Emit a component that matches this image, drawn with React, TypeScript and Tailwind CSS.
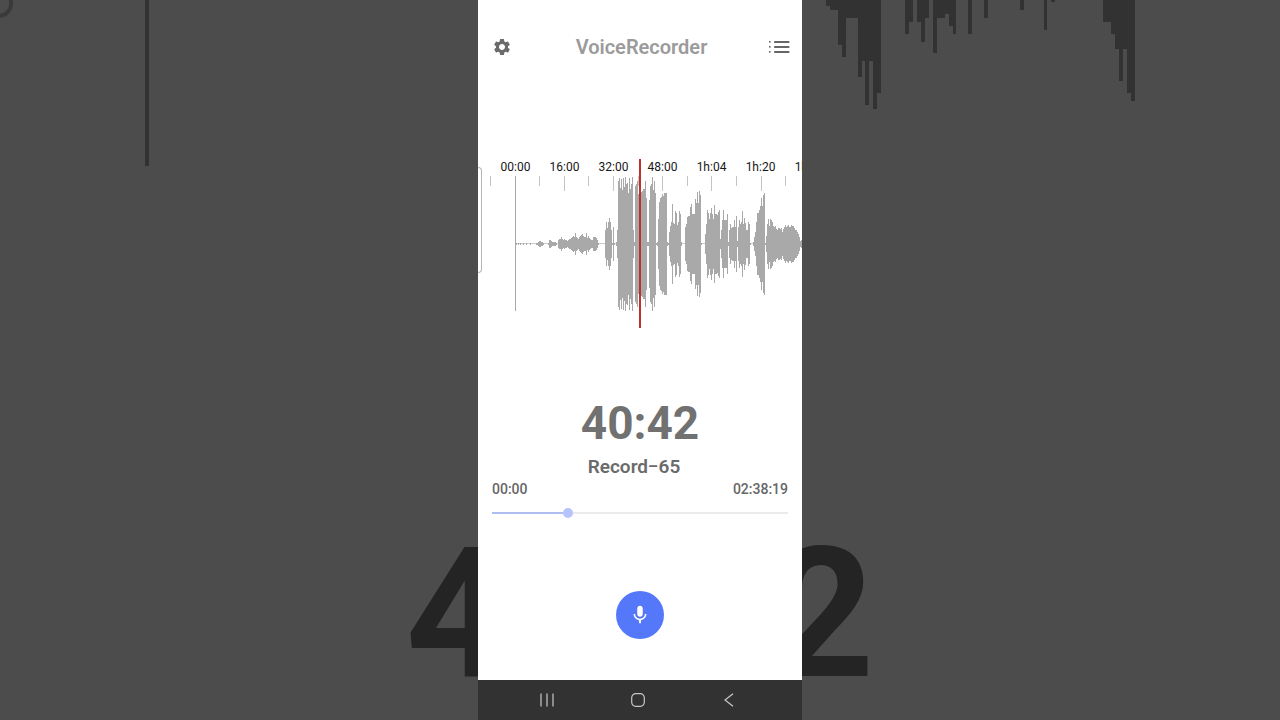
import { useState } from "react";
import { MdMic, MdSettings } from "react-icons/md";

const DURATION = 9499;

const labels = ["00:00", "16:00", "32:00", "48:00", "1h:04", "1h:20", "1h:36"];

// Half height of every bar, one bar per unit, starting at x = WAVE_START
const WAVE_START = 38;
const levels = [
  1, 0, 1, 0, 1, 0, 0, 1, 0, 0, 1, 0, 0, 0, 1, 0, 0, 0, 0, 0,
  1, 1, 2, 3, 3, 2, 2, 1, 0, 0, 0, 0, 1, 4, 4, 3, 2, 2, 2, 2,
  1, 0, 4, 5, 5, 7, 5, 4, 5, 4, 4, 3, 4, 5, 5, 6, 7, 8, 7, 11,
  7, 6, 5, 7, 8, 9, 10, 8, 7, 7, 11, 6, 8, 6, 5, 4, 4, 7, 7, 7,
  6, 4, 1, 0, 0, 0, 0, 0, 0, 14, 22, 16, 22, 26, 22, 14, 1, 17, 1, 0,
  2, 14, 63, 66, 56, 65, 54, 66, 57, 67, 60, 61, 51, 66, 55, 60, 67, 14, 2, 58,
  60, 63, 50, 53, 64, 52, 53, 55, 55, 63, 46, 2, 2, 44, 58, 60, 67, 54, 63, 51,
  1, 2, 25, 42, 46, 47, 50, 48, 51, 51, 51, 2, 1, 12, 18, 22, 40, 21, 20, 33,
  31, 19, 22, 33, 30, 2, 0, 0, 0, 17, 20, 27, 28, 28, 37, 40, 30, 30, 30, 45,
  41, 52, 41, 53, 49, 1, 0, 0, 0, 10, 20, 34, 31, 25, 31, 36, 30, 25, 39, 30,
  30, 29, 32, 34, 5, 14, 24, 34, 24, 24, 24, 30, 2, 14, 20, 16, 17, 17, 24, 17,
  28, 3, 17, 24, 20, 22, 33, 20, 26, 21, 14, 14, 22, 20, 1, 0, 0, 2, 7, 12,
  22, 31, 31, 34, 38, 46, 38, 49, 51, 1, 8, 20, 25, 18, 25, 24, 22, 18, 17, 18,
  15, 14, 16, 16, 15, 16, 12, 15, 17, 19, 17, 18, 19, 17, 17, 19, 18, 18, 16, 14,
  14, 12, 10, 7, 3, 4,
];

const Bars = ({ className }: { className: string }) => (
  <g className={className}>
    <rect x={37} y={0} width={1} height={135} />
    <rect x={38} y={67} width={286} height={1} opacity={0.6} />
    {levels.map((level, index) =>
      level > 0 ? (
        <rect
          key={index}
          x={WAVE_START + index}
          y={67.5 - level}
          width={1}
          height={level * 2}
        />
      ) : null
    )}
  </g>
);

const ticks = Array.from({ length: 13 }, (_, index) => ({
  x: Math.round(12 + index * 24.6),
  long: index % 2 === 1 && index > 1,
}));

const Backdrop = () => (
  <svg
    aria-hidden="true"
    viewBox="0 269 324 182"
    preserveAspectRatio="xMidYMid slice"
    className="absolute inset-0 h-full w-full"
  >
    <g transform="translate(0 176)" shapeRendering="crispEdges">
      <Bars className="fill-[#323232]" />
    </g>
    <rect
      x={-10}
      y={168}
      width={13}
      height={105}
      rx={3}
      fill="none"
      strokeWidth={1}
      className="stroke-[#3a3a3a]"
    />
    <text
      x={162}
      y={440}
      textAnchor="middle"
      className="fill-[#242424] text-[46px] font-bold"
    >
      40:42
    </text>
  </svg>
);

const Timeline = () => (
  <section className="relative mt-24 overflow-hidden">
    <div className="flex pl-[13px] text-center text-xs leading-4 text-neutral-900">
      {labels.map((label) => (
        <span key={label} className="w-[49px] shrink-0">
          {label}
        </span>
      ))}
    </div>
    <svg
      viewBox="0 0 324 152"
      className="mt-px h-[152px] w-full"
      shapeRendering="crispEdges"
    >
      {ticks.map((tick) => (
        <rect
          key={tick.x}
          x={tick.x}
          y={0}
          width={1}
          height={tick.long ? 15 : 10}
          className="fill-[#c4c4c4]"
        />
      ))}
      <Bars className="fill-[#a9a9a9]" />
    </svg>

    {/* Edge handle and playhead */}
    <div className="absolute top-2 left-0 h-[106px] w-1 rounded-r-sm border border-l-0 border-[#b5b5b5]" />
    <div className="absolute inset-y-0 left-1/2 w-0.5 -translate-x-1/2 bg-[#bf3030]" />
  </section>
);

const App = () => {
  const [position, setPosition] = useState(2365);

  return (
    <div className="relative min-h-screen overflow-hidden bg-[#4c4c4c] font-['Roboto',sans-serif]">
      <Backdrop />

      <main className="relative mx-auto flex min-h-screen w-full max-w-[324px] flex-col bg-white">
        {/* Header */}
        <header className="flex items-center justify-between px-3 pt-[31px]">
          <button type="button" aria-label="Settings" className="text-[#6b6b6b]">
            <MdSettings className="h-5 w-6" />
          </button>
          <h1 className="text-xl leading-8 font-semibold text-[#9b9b9b]">
            VoiceRecorder
          </h1>
          <button type="button" aria-label="Recordings">
            <svg viewBox="0 0 21 12" className="h-3 w-[21px] fill-[#666]">
              <rect x={0} y={0} width={1.6} height={1.6} />
              <rect x={0} y={5} width={1.6} height={1.6} />
              <rect x={0} y={10} width={1.6} height={1.6} />
              <rect x={5} y={0} width={15.5} height={2} rx={0.8} />
              <rect x={5} y={5} width={15.5} height={2} rx={0.8} />
              <rect x={5} y={10} width={15.5} height={2} rx={0.8} />
            </svg>
          </button>
        </header>

        <Timeline />

        {/* Current record */}
        <p className="mt-[71px] text-center text-[46px] leading-[48px] font-bold text-[#717171]">
          40:42
        </p>
        <h2 className="mt-2 pr-3 text-center text-[19px] leading-6 font-semibold text-[#6b6b6b]">
          Record−65
        </h2>
        <div className="flex justify-between px-3.5 text-sm leading-5 font-medium text-[#666]">
          <span>00:00</span>
          <span>02:38:19</span>
        </div>
        <div className="mt-1.5 flex px-3.5">
          <input
            type="range"
            aria-label="Playback position"
            min={0}
            max={DURATION}
            value={position}
            onChange={(event) => setPosition(Number(event.target.value))}
            style={{ backgroundSize: `${(position / DURATION) * 100}% 2px, 100% 2px` }}
            className="h-4 w-full appearance-none bg-[linear-gradient(#afbdf3,#afbdf3),linear-gradient(#ebebee,#ebebee)] bg-left bg-no-repeat [&::-webkit-slider-thumb]:size-2.5 [&::-webkit-slider-thumb]:appearance-none [&::-webkit-slider-thumb]:rounded-full [&::-webkit-slider-thumb]:bg-[#b7c4fb]"
          />
        </div>

        {/* Record button */}
        <div className="flex grow items-end justify-center pb-[41px]">
          <button
            type="button"
            aria-label="Record"
            className="flex size-12 items-center justify-center rounded-full bg-[#5578fb] text-white"
          >
            <MdMic className="size-[22px]" />
          </button>
        </div>

        {/* System navigation */}
        <nav className="flex h-10 items-center justify-center bg-[#323232] pr-1 text-[#c8c8c8]">
          <button type="button" aria-label="Recent apps" className="flex w-[91px] justify-center">
            <svg viewBox="0 0 14 14" className="size-3.5" fill="none" stroke="currentColor">
              <path d="M1 .5v13M7 .5v13M13 .5v13" strokeWidth={1.2} />
            </svg>
          </button>
          <button type="button" aria-label="Home" className="flex w-[91px] justify-center">
            <svg viewBox="0 0 14 14" className="size-3.5" fill="none" stroke="currentColor">
              <rect x={0.7} y={0.7} width={12.6} height={12.6} rx={4} strokeWidth={1.2} />
            </svg>
          </button>
          <button type="button" aria-label="Back" className="flex w-[91px] justify-center">
            <svg viewBox="0 0 14 14" className="size-3.5" fill="none" stroke="currentColor">
              <path d="M11 .7 3 7l8 6.3" strokeWidth={1.2} />
            </svg>
          </button>
        </nav>
      </main>
    </div>
  );
};

export default App;
